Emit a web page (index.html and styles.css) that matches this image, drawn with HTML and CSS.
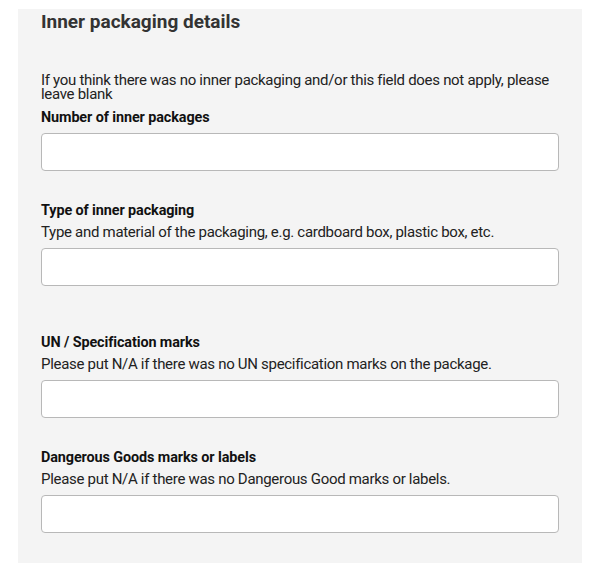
FILE: index.html
```html
<!DOCTYPE html>
<html lang="en">
<head>
  <meta charset="UTF-8">
  <meta name="viewport" content="width=device-width, initial-scale=1.0">
  <title>Inner packaging details</title>
  <link rel="stylesheet" href="styles.css">
</head>
<body>
  <section class="panel">
    <h2>Inner packaging details</h2>
    <p class="hint">If you think there was no inner packaging and/or this field does not apply, please leave blank</p>

    <div class="field first">
      <label for="inner-count">Number of inner packages</label>
      <input type="text" id="inner-count">
    </div>

    <div class="field">
      <label for="inner-type">Type of inner packaging</label>
      <p class="desc">Type and material of the packaging, e.g. cardboard box, plastic box, etc.</p>
      <input type="text" id="inner-type">
    </div>

    <div class="field spaced">
      <label for="un-marks">UN / Specification marks</label>
      <p class="desc">Please put N/A if there was no UN specification marks on the package.</p>
      <input type="text" id="un-marks">
    </div>

    <div class="field">
      <label for="dg-marks">Dangerous Goods marks or labels</label>
      <p class="desc">Please put N/A if there was no Dangerous Good marks or labels.</p>
      <input type="text" id="dg-marks">
    </div>
  </section>
</body>
</html>
```

FILE: styles.css
```css
* { margin: 0; padding: 0; box-sizing: border-box; }
body { background: #fff; font-family: Roboto, 'Liberation Sans', sans-serif; color: #222; }

.panel {
  width: 564px;
  margin: 9px 0 0 18px;
  padding: 0 23px 30px;
  background: #f4f4f4;
}
.panel h2 { font-size: 19px; line-height: 26px; font-weight: 700; color: #333; }

.hint { margin-top: 38px; font-size: 15px; line-height: 14px; letter-spacing: -0.3px; color: #222; }

.field { margin-top: 30px; display: flex; flex-direction: column; }
.field.first { margin-top: 7px; }
.field.spaced { margin-top: 47px; }
.field label { font-size: 14.4px; line-height: 20px; font-weight: 700; letter-spacing: -0.1px; color: #111; margin-bottom: 5px; }
.field .desc { font-size: 15px; line-height: 21px; letter-spacing: -0.3px; margin-top: -4px; margin-bottom: 5px; color: #222; }
.field input {
  width: 100%;
  height: 38px;
  border: 1px solid #b8b8b8;
  border-radius: 4px;
  background: #fff;
  font: inherit;
}
```
